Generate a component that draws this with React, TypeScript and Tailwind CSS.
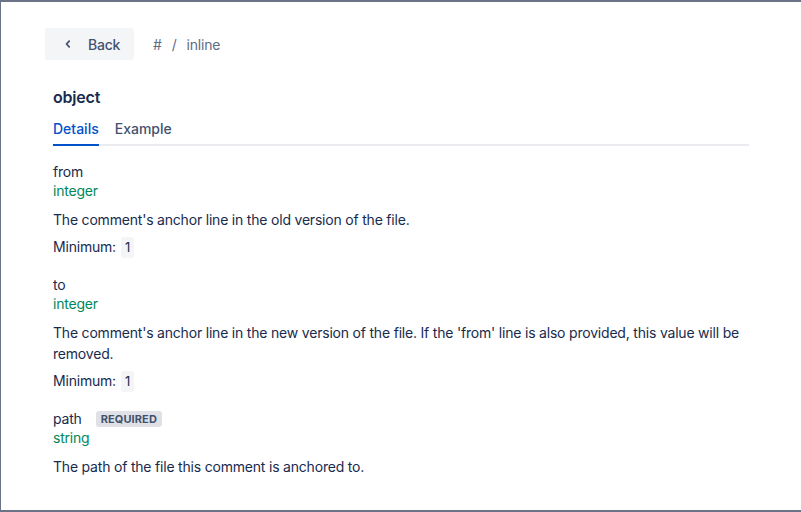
import React from "react";

function Field({
  name,
  type,
  desc,
  min,
  required,
}: {
  name: string;
  type: string;
  desc: string;
  min?: string;
  required?: boolean;
}) {
  return (
    <div className="flex flex-col">
      <div className="flex items-center h-[19px] leading-[19px]">
        <span className="text-[#172b4d] text-[14px]">{name}</span>
        {required && (
          <span className="ml-[14px] h-4 px-[5px] rounded-[3px] bg-[#dfe1e6] text-[#42526e] text-[11px] font-bold leading-4 tracking-[0.01em]">
            REQUIRED
          </span>
        )}
      </div>
      <div className="text-[#00875a] text-[14px] leading-5">{type}</div>
      <div className="mt-2 text-[#172b4d] text-[14px] leading-[21px]">{desc}</div>
      {min && (
        <div className="mt-[7px] flex items-center h-5 text-[#172b4d] text-[14px] leading-5">
          <span>Minimum:</span>
          <span className="ml-[5px] px-[4px] h-[21px] leading-[21px] rounded-[3px] bg-[#f4f5f7] text-[13px] text-[#172b4d]">
            {min}
          </span>
        </div>
      )}
    </div>
  );
}

export default function App() {
  return (
    <div
      className="w-[801px] h-[512px] bg-white border-t-2 border-l border-b-2 border-r-0 border-[#6b7386] overflow-hidden tracking-[-0.2px]"
      style={{ fontFamily: "Inter, 'Noto Sans', sans-serif" }}
    >
      <div className="pl-[52px] pr-[52px] pt-[26px]">
        <div className="flex items-center h-8">
          <button className="-ml-2 flex items-center h-8 w-[89px] rounded-[3px] bg-[#f4f5f7] text-[#42526e] text-[14px] font-medium">
            <svg
              width="16"
              height="16"
              viewBox="0 0 16 16"
              className="ml-[15px]"
              fill="none"
            >
              <path
                d="M9.2 5.2 6.5 8l2.7 2.8"
                stroke="#42526e"
                strokeWidth="1.8"
                strokeLinecap="round"
                strokeLinejoin="round"
              />
            </svg>
            <span className="ml-[12px]">Back</span>
          </button>
          <div className="ml-[19px] flex items-center text-[#5e6c84] text-[14px]">
            <span>#</span>
            <span className="ml-[10px]">/</span>
            <span className="ml-[10px]">inline</span>
          </div>
        </div>
        <div className="mt-[27px] text-[#172b4d] text-[16px] font-semibold leading-5">
          object
        </div>
        <div className="mt-[12px] flex border-b-2 border-[#ebecf0] text-[14px] tracking-normal">
          <div className="relative pb-[5px] text-[#0052cc] font-medium leading-5">
            Details
            <div className="absolute left-0 right-0 -bottom-[2px] h-[2px] bg-[#0052cc]" />
          </div>
          <div className="ml-4 pb-[5px] text-[#42526e] font-medium leading-5">Example</div>
        </div>
        <div className="mt-[16px] flex flex-col gap-[18px]">
          <Field
            name="from"
            type="integer"
            desc="The comment's anchor line in the old version of the file."
            min="1"
          />
          <Field
            name="to"
            type="integer"
            desc="The comment's anchor line in the new version of the file. If the 'from' line is also provided, this value will be removed."
            min="1"
          />
          <Field
            name="path"
            type="string"
            desc="The path of the file this comment is anchored to."
            required
          />
        </div>
      </div>
    </div>
  );
}
